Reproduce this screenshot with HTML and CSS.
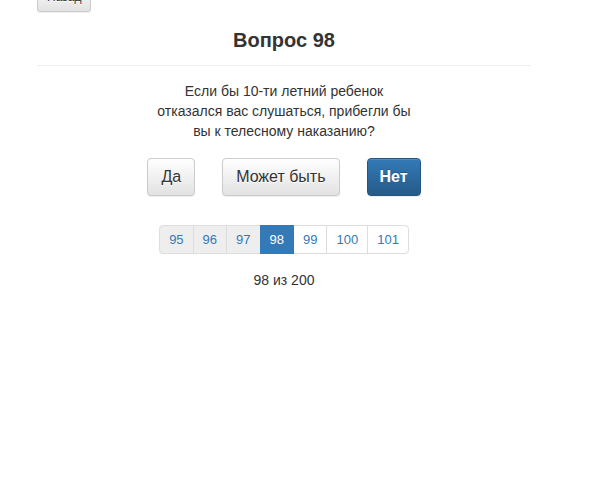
FILE: index.html
```html
<!DOCTYPE html>
<html lang="ru">
<head>
  <meta charset="UTF-8">
  <meta name="viewport" content="width=device-width, initial-scale=1.0">
  <title>Вопрос 98</title>
  <link rel="stylesheet" href="styles.css">
</head>
<body>
  <div class="wrap">
    <button class="btn btn-sm back">Назад</button>

    <h1 class="title">Вопрос 98</h1>
    <hr class="divider">

    <p class="question">Если бы 10-ти летний ребенок<br>отказался вас слушаться, прибегли бы<br>вы к телесному наказанию?</p>

    <div class="answers">
      <button class="btn">Да</button>
      <button class="btn">Может быть</button>
      <button class="btn btn-primary">Нет</button>
    </div>

    <ul class="pager">
      <li class="done"><a href="#">95</a></li>
      <li class="done"><a href="#">96</a></li>
      <li class="done"><a href="#">97</a></li>
      <li class="active"><a href="#">98</a></li>
      <li><a href="#">99</a></li>
      <li><a href="#">100</a></li>
      <li><a href="#">101</a></li>
    </ul>

    <div class="counter">98 из 200</div>
  </div>
</body>
</html>
```

FILE: styles.css
```css
body {
  margin: 0;
  font-family: "Liberation Sans", Arial, sans-serif;
  font-size: 14px;
  line-height: 20px;
  color: #333;
  background: #fff;
}
.wrap {
  width: 494px;
  margin-left: 37px;
  text-align: center;
}
.btn {
  display: inline-block;
  font-family: inherit;
  font-size: 16px;
  line-height: 22px;
  padding: 7px 13px;
  color: #333;
  border: 1px solid #ccc;
  border-radius: 4px;
  background-color: #f0f0f0;
  background-image: linear-gradient(to bottom, #fff 0, #e2e2e2 100%);
  text-shadow: 0 1px 0 #fff;
  box-shadow: inset 0 1px 0 rgba(255, 255, 255, 0.15), 0 1px 1px rgba(0, 0, 0, 0.075);
  cursor: pointer;
}
.btn-sm {
  font-size: 12px;
  line-height: 18px;
  padding: 5px 9px;
  border-radius: 3px;
}
.btn-primary {
  color: #fff;
  font-weight: bold;
  padding: 7px 12px;
  border-color: #245580;
  background-image: linear-gradient(to bottom, #337ab7 0, #265a88 100%);
  text-shadow: 0 -1px 0 rgba(0, 0, 0, 0.2);
}
.back {
  display: block;
  margin-top: -18px;
}
.title {
  margin: 16px 0 0;
  font-size: 20px;
  line-height: 24px;
  font-weight: bold;
}
.divider {
  margin: 13px 0 0;
  border: 0;
  border-top: 1px solid #eee;
}
.question {
  margin: 15px 0 0;
}
.answers {
  margin-top: 17px;
  display: flex;
  justify-content: center;
  gap: 27px;
}
.pager {
  list-style: none;
  margin: 29px 0 0;
  padding: 0;
  display: flex;
  justify-content: center;
}
.pager li a {
  display: block;
  margin-left: -1px;
  padding: 5px 9px;
  font-size: 13px;
  line-height: 17px;
  color: #337ab7;
  text-decoration: none;
  background: #fff;
  border: 1px solid #ddd;
}
.pager li:first-child a {
  margin-left: 0;
  border-radius: 4px 0 0 4px;
}
.pager li:last-child a {
  border-radius: 0 4px 4px 0;
}
.pager li.done a {
  background: #eee;
}
.pager li.active a {
  position: relative;
  color: #fff;
  background: #337ab7;
  border-color: #337ab7;
}
.counter {
  margin-top: 16px;
}
```
